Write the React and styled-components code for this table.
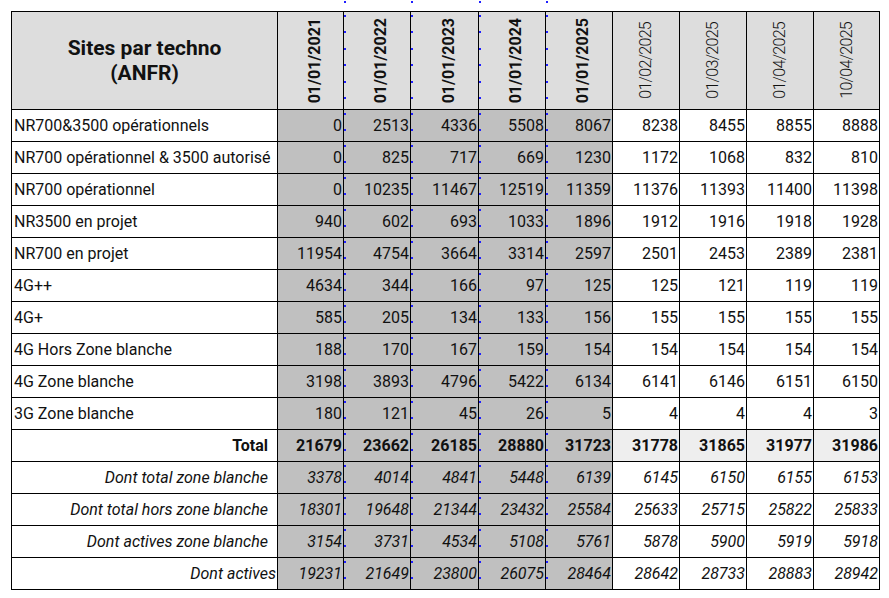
import React from 'react'
import styled, { createGlobalStyle, css } from 'styled-components'

const GlobalStyle = createGlobalStyle`
  html, body {
    margin: 0;
    background: #fff;
  }
  body {
    font-family: Roboto, "Liberation Sans", sans-serif;
    color: #111;
  }
`

const dates = [
  { label: '01/01/2021', strong: true },
  { label: '01/01/2022', strong: true },
  { label: '01/01/2023', strong: true },
  { label: '01/01/2024', strong: true },
  { label: '01/01/2025', strong: true },
  { label: '01/02/2025' },
  { label: '01/03/2025' },
  { label: '01/04/2025' },
  { label: '10/04/2025' },
]
const widths = [266, 66, 67, 68, 67, 67, 67, 67, 67, 66]

const rows = [
  ['NR700&3500 opérationnels', 0, 2513, 4336, 5508, 8067, 8238, 8455, 8855, 8888],
  ['NR700 opérationnel & 3500 autorisé', 0, 825, 717, 669, 1230, 1172, 1068, 832, 810],
  ['NR700 opérationnel', 0, 10235, 11467, 12519, 11359, 11376, 11393, 11400, 11398],
  ['NR3500 en projet', 940, 602, 693, 1033, 1896, 1912, 1916, 1918, 1928],
  ['NR700 en projet', 11954, 4754, 3664, 3314, 2597, 2501, 2453, 2389, 2381],
  ['4G++', 4634, 344, 166, 97, 125, 125, 121, 119, 119],
  ['4G+', 585, 205, 134, 133, 156, 155, 155, 155, 155],
  ['4G Hors Zone blanche', 188, 170, 167, 159, 154, 154, 154, 154, 154],
  ['4G Zone blanche', 3198, 3893, 4796, 5422, 6134, 6141, 6146, 6151, 6150],
  ['3G Zone blanche', 180, 121, 45, 26, 5, 4, 4, 4, 3],
]
const total = ['Total', 21679, 23662, 26185, 28880, 31723, 31778, 31865, 31977, 31986]
const subtotals = [
  ['Dont total zone blanche', 3378, 4014, 4841, 5448, 6139, 6145, 6150, 6155, 6153],
  ['Dont total hors zone blanche', 18301, 19648, 21344, 23432, 25584, 25633, 25715, 25822, 25833],
  ['Dont actives zone blanche', 3154, 3731, 4534, 5108, 5761, 5878, 5900, 5919, 5918],
  ['Dont actives', 19231, 21649, 23800, 26075, 28464, 28642, 28733, 28883, 28942],
]

const Page = styled.div`
  padding: 11px 0 0 11px;
`

const Sheet = styled.table`
  border-collapse: collapse;
  table-layout: fixed;
  width: 868px;
  font-size: 16px;
`

// blue page-break dots drawn along the left edge of some columns
const marker = css`
  position: relative;
  &::before {
    content: '';
    position: absolute;
    left: 0;
    top: 3px;
    bottom: 0;
    width: 2px;
    background: repeating-linear-gradient(to bottom, #1f1fff 0 2px, transparent 2px ${p => p.$step || 16}px);
  }
`

const outsideDot = css`
  &::after {
    content: '';
    position: absolute;
    left: 0;
    width: 2px;
    height: 2px;
    background: #1f1fff;
  }
`

const HeadCell = styled.th`
  border: 1px solid #000;
  background: #dddddd;
  height: 97px;
  padding: 0;
  vertical-align: middle;
  ${p => p.$marked && marker}
  ${p => p.$marked && outsideDot}
  &::after { top: -11px; }
`

const Title = styled.div`
  font-size: 21px;
  font-weight: 700;
  line-height: 25px;
  text-align: center;
`

const DateLabel = styled.div`
  writing-mode: vertical-rl;
  transform: rotate(180deg);
  margin: 0 auto;
  font-size: 16px;
  line-height: 18px;
  font-weight: ${p => (p.$strong ? 700 : 300)};
  letter-spacing: ${p => (p.$strong ? '0' : '-0.7px')};
  position: relative;
  left: ${p => (p.$strong ? '4px' : '0')};
`

const Row = styled.tr`
  height: 32px;
`

const Label = styled.td`
  border: 1px solid #000;
  padding: 0 ${p => p.$pad ?? 0}px 0 2px;
  text-align: ${p => p.$align || 'left'};
  font-weight: ${p => (p.$bold ? 700 : 400)};
  font-style: ${p => (p.$italic ? 'italic' : 'normal')};
  white-space: nowrap;
  background: #fff;
`

const Num = styled.td`
  border: 1px solid #000;
  padding: 0 1px 0 0;
  text-align: right;
  white-space: nowrap;
  font-weight: ${p => (p.$bold ? 700 : 400)};
  font-style: ${p => (p.$italic ? 'italic' : 'normal')};
  background: ${p => (p.$shaded ? '#c0c0c0' : p.$bold ? '#eeeeee' : '#fff')};
  ${p => p.$marked && marker}
  ${p => p.$last && p.$marked && outsideDot}
  &::after { bottom: -4px; }
`

const isMarked = i => i >= 1 && i <= 4

function DataRow({ data, label, last }) {
  const [, ...values] = data
  return (
    <Row>
      {label}
      {values.map((v, i) => (
        <Num
          key={i}
          $shaded={i < 5}
          $marked={isMarked(i)}
          $bold={label.props.$bold}
          $italic={label.props.$italic}
          $last={last}
        >
          {v}
        </Num>
      ))}
    </Row>
  )
}

export default function App() {
  return (
    <Page>
      <GlobalStyle />
      <Sheet>
        <colgroup>
          {widths.map((w, i) => (
            <col key={i} style={{ width: w }} />
          ))}
        </colgroup>
        <thead>
          <tr>
            <HeadCell>
              <Title>
                Sites par techno
                <br />
                (ANFR)
              </Title>
            </HeadCell>
            {dates.map((d, i) => (
              <HeadCell key={d.label} $marked={isMarked(i)} $step={16.4}>
                <DateLabel $strong={d.strong}>{d.label}</DateLabel>
              </HeadCell>
            ))}
          </tr>
        </thead>
        <tbody>
          {rows.map(r => (
            <DataRow key={r[0]} data={r} label={<Label>{r[0]}</Label>} />
          ))}
          <DataRow
            data={total}
            label={
              <Label $align="right" $pad={9} $bold>
                {total[0]}
              </Label>
            }
          />
          {subtotals.map((r, i) => (
            <DataRow
              key={r[0]}
              data={r}
              last={i === subtotals.length - 1}
              label={
                <Label $align="right" $pad={i === subtotals.length - 1 ? 1 : 9} $italic>
                  {r[0]}
                </Label>
              }
            />
          ))}
        </tbody>
      </Sheet>
    </Page>
  )
}
